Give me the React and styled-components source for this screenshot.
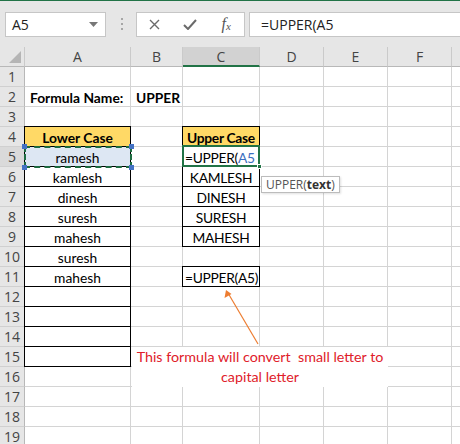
import React from 'react';
import styled, { createGlobalStyle, css } from 'styled-components';

const GlobalStyle = createGlobalStyle`
  html, body { margin: 0; padding: 0; background: #fff; }
  body { width: 460px; height: 444px; overflow: hidden; font-family: 'Open Sans', sans-serif; }
  * { box-sizing: border-box; }
`;

const Window = styled.div`
  width: 460px;
  height: 444px;
  overflow: hidden;
  background: #fff;
`;

const FormulaBar = styled.div`
  height: 47px;
  border-top: 1px solid #217346;
  background: #e6e6e6;
  display: flex;
  align-items: center;
  padding-left: 5px;
`;

const NameBox = styled.div`
  width: 101px;
  height: 25px;
  background: #fff;
  border: 1px solid #c6c6c6;
  display: flex;
  align-items: center;
  justify-content: space-between;
  padding: 0 7px 0 6px;
  font: 14px 'Open Sans', sans-serif;
  color: #222;
`;

const Dots = styled.div`
  display: flex;
  flex-direction: column;
  gap: 3px;
  margin: 0 13px 0 15px;
  span { width: 2px; height: 2px; background: #a6a6a6; }
`;

const IconGroup = styled.div`
  width: 109px;
  height: 25px;
  background: #fff;
  border: 1px solid #c6c6c6;
  display: grid;
  grid-template-columns: repeat(3, 1fr);
  align-items: center;
  justify-items: center;
  color: #6a6a6a;
`;

const Fx = styled.span`
  font: italic 16px 'Liberation Serif', serif;
  color: #555;
  sub { font-size: 11px; vertical-align: -1px; }
`;

const FormulaInput = styled.div`
  flex: 1;
  height: 25px;
  margin-left: 4px;
  background: #fff;
  border: 1px solid #c6c6c6;
  border-right: none;
  padding-left: 11px;
  font: 14px 'Open Sans', sans-serif;
  line-height: 23px;
  color: #222;
`;

const Sheet = styled.div`
  display: grid;
  grid-template-columns: 25px 106px 52px 77px 64px 64px 64px 1fr;
  grid-auto-rows: 20px;
`;

const HeadCell = styled.div`
  position: relative;
  background: ${p => (p.$active ? '#d2d2d2' : '#e6e6e6')};
  border-right: 1px solid #cacaca;
  border-bottom: ${p => (p.$active ? '2px solid #217346' : '1px solid #b8b8b8')};
  font: 14px 'Open Sans', sans-serif;
  color: #444;
  text-align: center;
  line-height: 19px;
`;

const Corner = styled(HeadCell)`
  display: flex;
  align-items: flex-end;
  justify-content: flex-end;
  padding: 0 3px 3px 0;
`;

const RowHead = styled.div`
  background: ${p => (p.$active ? '#dadada' : '#e6e6e6')};
  border-right: 1px solid #b8b8b8;
  border-bottom: 1px solid #d0d0d0;
  font: 14px 'Open Sans', sans-serif;
  color: #444;
  text-align: center;
  line-height: 20px;
`;

const Cell = styled.div`
  position: relative;
  border-right: 1px solid #d4d4d4;
  border-bottom: 1px solid #d4d4d4;
  background: ${p => p.$fill || '#fff'};
  font: ${p => (p.$bold ? 700 : 400)} 13.8px Lato, 'Open Sans', sans-serif;
  letter-spacing: ${p => (p.$caps ? '-0.3px' : '0')};
  color: #000;
  text-align: ${p => p.$align || 'left'};
  padding: 0 ${p => (p.$caps ? '2px' : '5px')};
  line-height: 21px;
  white-space: nowrap;
  ${p => p.$boxed && css`
    &::after {
      content: '';
      position: absolute;
      inset: -1px;
      border: 1px solid #000;
      pointer-events: none;
    }
  `}
`;

const RefFrame = styled.div`
  position: absolute;
  inset: -1px -2px -2px -1px;
  border: 2px dashed #1d6b41;
  z-index: 2;
  pointer-events: none;
`;

const Handle = styled.span`
  position: absolute;
  width: 5px;
  height: 5px;
  background: ${p => p.$color || '#4472c4'};
  border: ${p => (p.$ring ? '1px solid #fff' : 'none')};
  ${p => (p.$top ? 'top: -4px;' : 'bottom: -4px;')}
  ${p => (p.$left ? 'left: -4px;' : 'right: -4px;')}
`;

const EditFrame = styled.div`
  position: absolute;
  inset: -2px -1px -1px -1px;
  border: 2px solid #217346;
  z-index: 2;
  pointer-events: none;
`;

const RefText = styled.span`
  color: #3b6fc0;
`;

const Tip = styled.div`
  position: absolute;
  left: 78px;
  top: 9px;
  z-index: 3;
  height: 17px;
  padding: 0 4px;
  background: #fff;
  border: 1px solid #bcbcbc;
  box-shadow: 1px 1px 2px rgba(0, 0, 0, 0.12);
  font: 12px 'Open Sans', sans-serif;
  letter-spacing: 0;
  line-height: 15px;
  color: #555;
  b { color: #333; }
`;

const Note = styled.div`
  position: absolute;
  left: 1px;
  top: 0;
  z-index: 3;
  width: 256px;
  height: 40px;
  background: #fff;
  font: 14.3px Lato, 'Open Sans', sans-serif;
  line-height: 20px;
  color: #e0202a;
  text-align: center;
  white-space: pre;
`;

const ArrowLayer = styled.svg`
  position: absolute;
  left: 0;
  top: 0;
  z-index: 3;
  overflow: visible;
`;

const columns = ['A', 'B', 'C', 'D', 'E', 'F', ''];
const yellow = '#ffd966';

const rows = [
  {},
  { A: { text: 'Formula Name:', bold: true }, B: { text: 'UPPER', bold: true } },
  {},
  {
    A: { text: 'Lower Case', bold: true, align: 'center', fill: yellow, boxed: true },
    C: { text: 'Upper Case', bold: true, align: 'center', fill: yellow, boxed: true, caps: true },
  },
  { A: { text: 'ramesh', align: 'center', boxed: true, fill: '#dde7f3', ref: true }, C: { edit: true, boxed: true, caps: true } },
  { A: { text: 'kamlesh', align: 'center', boxed: true }, C: { text: 'KAMLESH', align: 'center', boxed: true, tip: true, caps: true } },
  { A: { text: 'dinesh', align: 'center', boxed: true }, C: { text: 'DINESH', align: 'center', boxed: true, caps: true } },
  { A: { text: 'suresh', align: 'center', boxed: true }, C: { text: 'SURESH', align: 'center', boxed: true, caps: true } },
  { A: { text: 'mahesh', align: 'center', boxed: true }, C: { text: 'MAHESH', align: 'center', boxed: true, caps: true } },
  { A: { text: 'suresh', align: 'center', boxed: true } },
  { A: { text: 'mahesh', align: 'center', boxed: true }, C: { text: '=UPPER(A5)', boxed: true, caps: true } },
  { A: { boxed: true }, C: { arrow: true } },
  { A: { boxed: true } },
  { A: { boxed: true } },
  { A: { boxed: true }, B: { note: true } },
  {},
  {},
  {},
  {},
];

function CellContent({ data }) {
  if (data.edit) {
    return (
      <>
        =UPPER(<RefText>A5</RefText>
        <EditFrame>
          <Handle $color="#217346" $ring style={{ right: -4, bottom: -4 }} />
        </EditFrame>
      </>
    );
  }
  return (
    <>
      {data.text}
      {data.ref && (
        <RefFrame>
          <Handle $top $left />
          <Handle $top />
          <Handle $left />
          <Handle />
        </RefFrame>
      )}
      {data.tip && (
        <Tip>
          UPPER(<b>text</b>)
        </Tip>
      )}
      {data.note && <Note>{'This formula will convert  small letter to\ncapital letter'}</Note>}
      {data.arrow && (
        <ArrowLayer width="80" height="60" viewBox="0 0 80 60">
          <line x1="75" y1="57" x2="45" y2="6" stroke="#ed7d31" strokeWidth="1.2" />
          <polygon points="43,3 41.5,11 48.5,7" fill="#ed7d31" />
        </ArrowLayer>
      )}
    </>
  );
}

export default function App() {
  return (
    <Window>
      <GlobalStyle />
      <FormulaBar>
        <NameBox>
          A5
          <svg width="9" height="5" viewBox="0 0 9 5">
            <polygon points="0,0 9,0 4.5,5" fill="#777" />
          </svg>
        </NameBox>
        <Dots>
          <span />
          <span />
          <span />
        </Dots>
        <IconGroup>
          <svg width="11" height="11" viewBox="0 0 11 11">
            <path d="M1 1 L10 10 M10 1 L1 10" stroke="#6a6a6a" strokeWidth="1.4" />
          </svg>
          <svg width="14" height="11" viewBox="0 0 14 11">
            <path d="M1 6 L5 10 L13 1" stroke="#6a6a6a" strokeWidth="2" fill="none" />
          </svg>
          <Fx>
            f<sub>x</sub>
          </Fx>
        </IconGroup>
        <FormulaInput>=UPPER(A5</FormulaInput>
      </FormulaBar>

      <Sheet>
        <Corner>
          <svg width="12" height="12" viewBox="0 0 12 12">
            <polygon points="12,0 12,12 0,12" fill="#b5b5b5" />
          </svg>
        </Corner>
        {columns.map((c, i) => (
          <HeadCell key={i} $active={c === 'C'}>
            {c}
          </HeadCell>
        ))}
        {rows.map((row, r) => (
          <React.Fragment key={r}>
            <RowHead $active={r === 4}>{r + 1}</RowHead>
            {columns.map((c, i) => {
              const data = row[c] || {};
              return (
                <Cell
                  key={i}
                  $bold={data.bold}
                  $align={data.align}
                  $fill={data.fill}
                  $boxed={data.boxed}
                  $caps={data.caps}
                >
                  <CellContent data={data} />
                </Cell>
              );
            })}
          </React.Fragment>
        ))}
      </Sheet>
    </Window>
  );
}
